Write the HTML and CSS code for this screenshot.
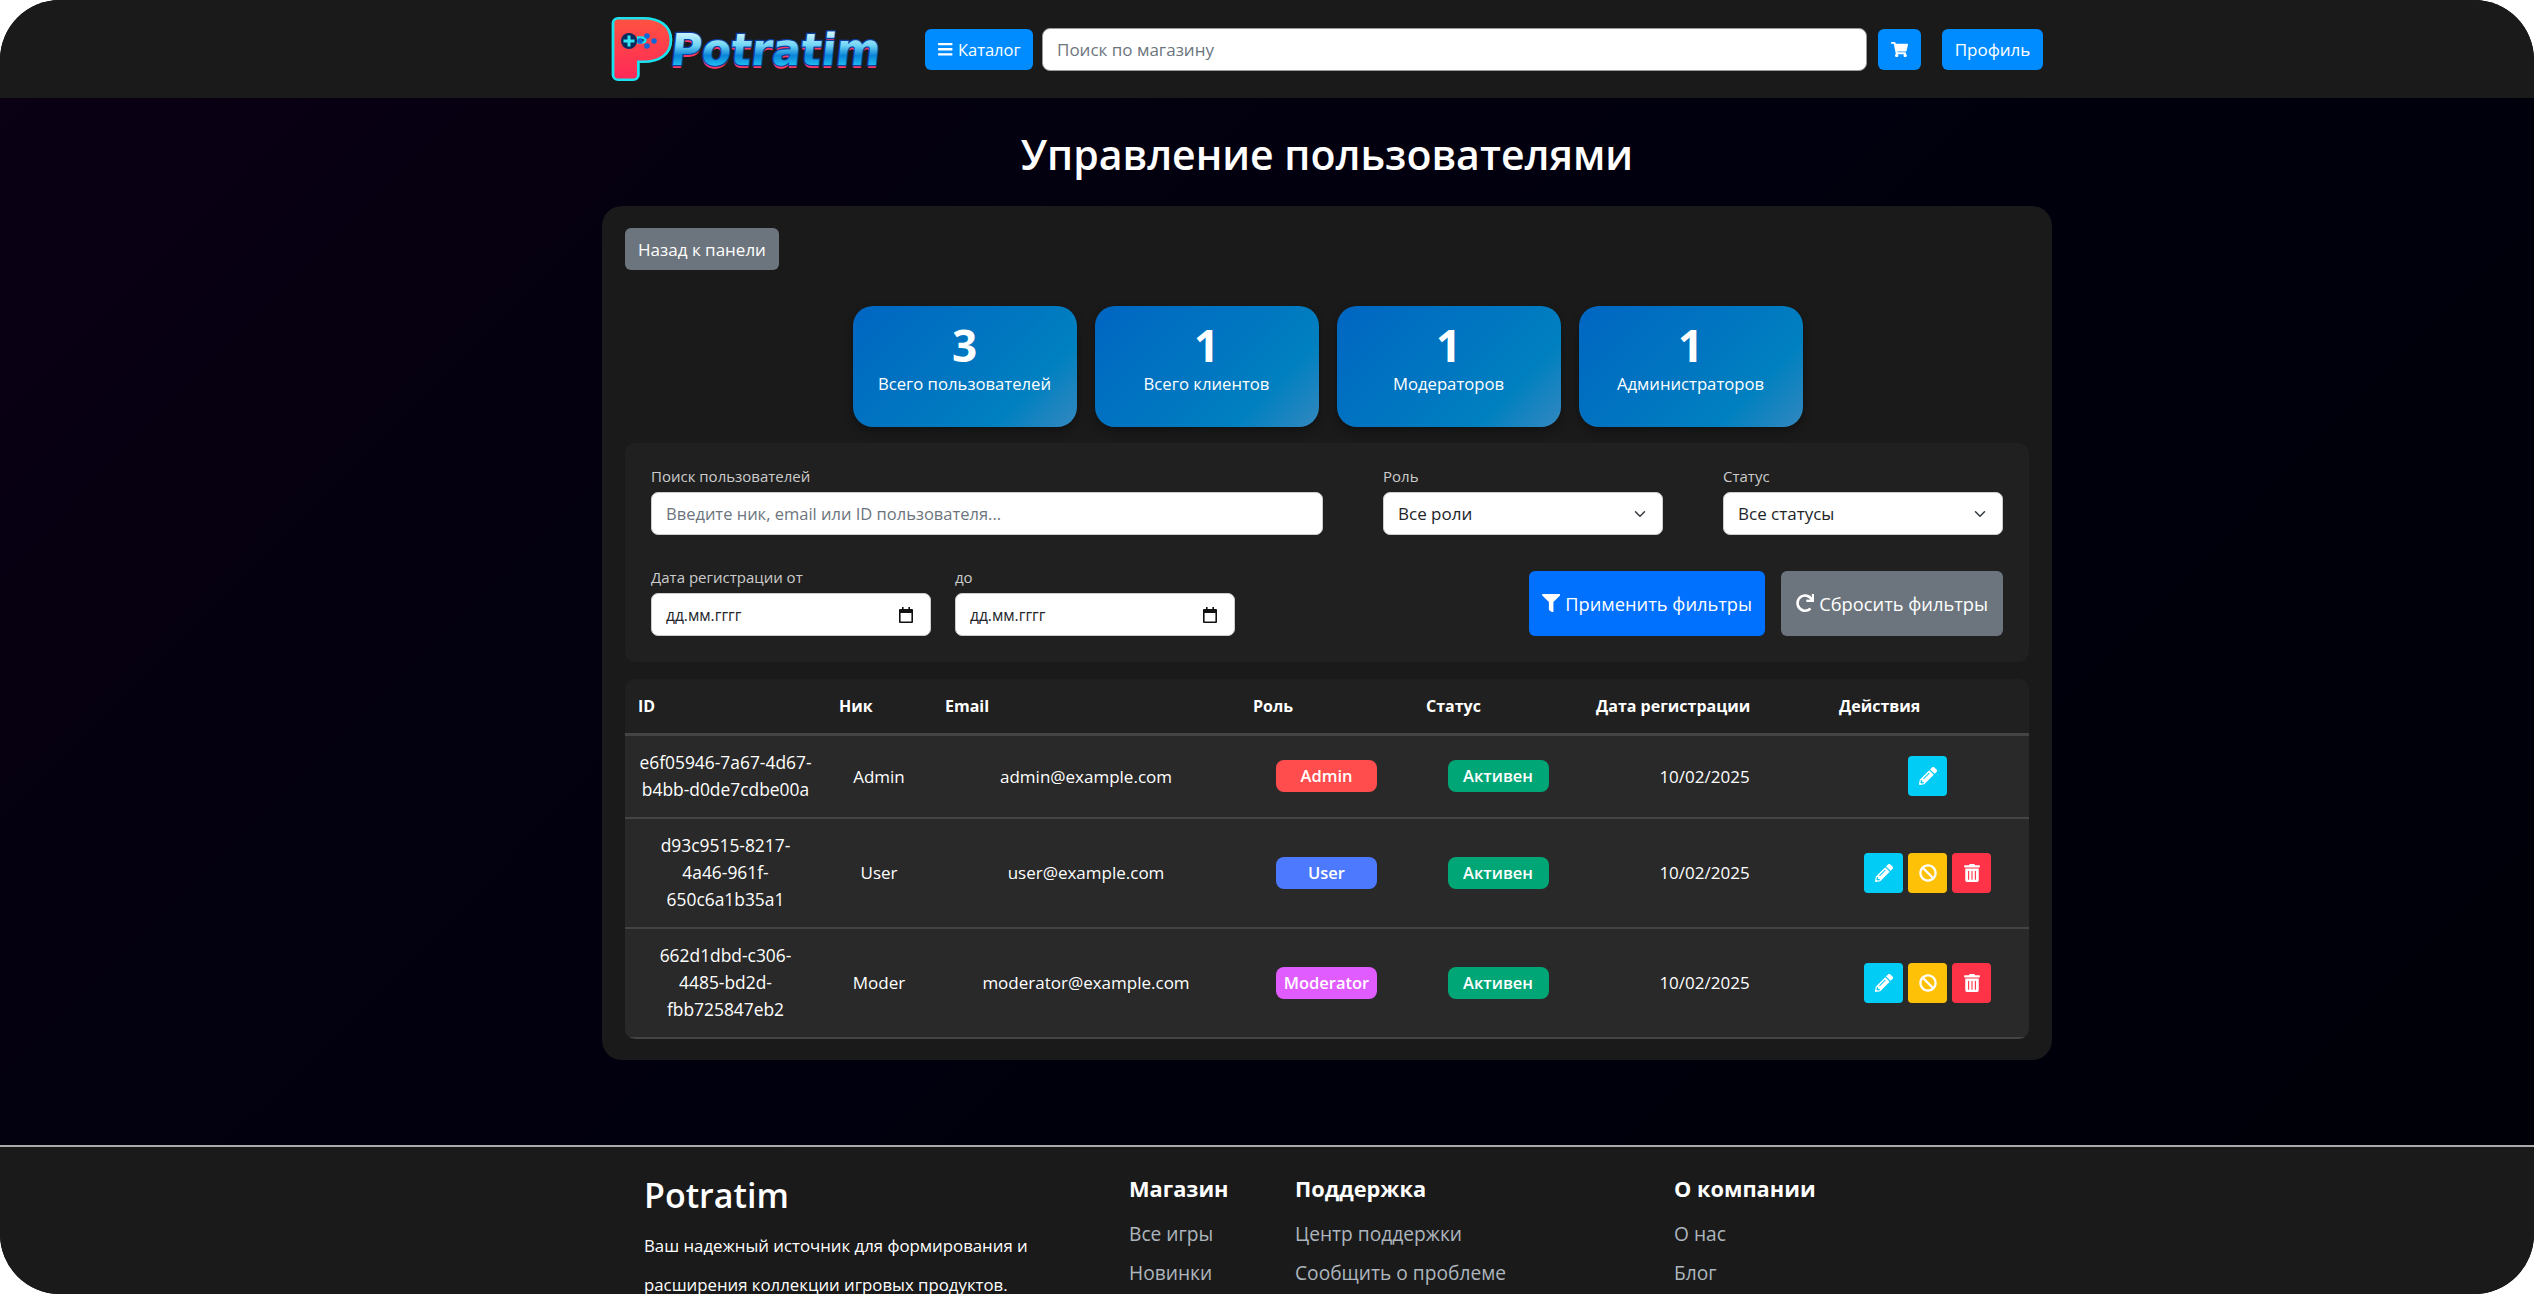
FILE: index.html
```html
<!DOCTYPE html>
<html lang="ru">
<head>
  <meta charset="UTF-8" />
  <meta name="viewport" content="width=device-width, initial-scale=1.0" />
  <title>Управление пользователями</title>
  <link rel="stylesheet" href="styles.css">
</head>
<body>
<svg class="icon-defs" width="0" height="0">
  <symbol id="i-bars" viewBox="0 0 448 512"><path d="M16 132h416c8.837 0 16-7.163 16-16V76c0-8.837-7.163-16-16-16H16C7.163 60 0 67.163 0 76v40c0 8.837 7.163 16 16 16zm0 160h416c8.837 0 16-7.163 16-16v-40c0-8.837-7.163-16-16-16H16c-8.837 0-16 7.163-16 16v40c0 8.837 7.163 16 16 16zm0 160h416c8.837 0 16-7.163 16-16v-40c0-8.837-7.163-16-16-16H16c-8.837 0-16 7.163-16 16v40c0 8.837 7.163 16 16 16z"/></symbol>
  <symbol id="i-cart" viewBox="0 0 576 512"><path d="M528.12 301.319l47.273-208C578.806 78.301 567.391 64 551.99 64H159.208l-9.166-44.81C147.758 8.021 137.93 0 126.529 0H24C10.745 0 0 10.745 0 24v16c0 13.255 10.745 24 24 24h69.883l70.248 343.435C147.325 417.1 136 435.222 136 456c0 30.928 25.072 56 56 56s56-25.072 56-56c0-15.674-6.447-29.835-16.824-40h209.647C430.447 426.165 424 440.326 424 456c0 30.928 25.072 56 56 56s56-25.072 56-56c0-22.172-12.888-41.332-31.579-50.405l5.517-24.276c3.413-15.018-8.002-29.319-23.403-29.319H218.117l-6.545-32h293.145c11.206 0 20.92-7.754 23.403-18.681z"/></symbol>
  <symbol id="i-filter" viewBox="0 0 512 512"><path d="M487.976 0H24.028C2.71 0-8.047 25.866 7.058 40.971L192 225.941V432c0 7.831 3.821 15.17 10.237 19.662l80 55.98C298.02 518.69 320 507.493 320 487.98V225.941l184.947-184.97C520.021 25.896 509.338 0 487.976 0z"/></symbol>
  <symbol id="i-redo" viewBox="0 0 512 512"><path d="M500.33 0h-47.41a12 12 0 0 0-12 12.57l4 82.76A247.42 247.42 0 0 0 256 8C119.34 8 7.9 119.53 8 256.19 8.1 393.07 119.1 504 256 504a247.1 247.1 0 0 0 166.18-63.91 12 12 0 0 0 .48-17.43l-34-34a12 12 0 0 0-16.38-.55A176 176 0 1 1 402.1 157.8l-101.53-4.87a12 12 0 0 0-12.57 12v47.41a12 12 0 0 0 12 12h200.33a12 12 0 0 0 12-12V12a12 12 0 0 0-12-12z"/></symbol>
  <symbol id="i-pencil" viewBox="0 0 512 512"><path d="M497.9 142.1l-46.1 46.1c-4.7 4.7-12.3 4.7-17 0l-111-111c-4.7-4.7-4.7-12.3 0-17l46.1-46.1c18.7-18.7 49.1-18.7 67.9 0l60.1 60.1c18.8 18.7 18.8 49.1 0 67.9zM284.2 99.8L21.6 362.4.4 483.9c-2.9 16.4 11.4 30.6 27.8 27.8l121.5-21.3 262.6-262.6c4.7-4.7 4.7-12.3 0-17l-111-111c-4.8-4.7-12.4-4.7-17.1 0zM124.1 339.9c-5.5-5.5-5.5-14.3 0-19.8l154-154c5.5-5.5 14.3-5.5 19.8 0s5.5 14.3 0 19.8l-154 154c-5.5 5.5-14.3 5.5-19.8 0zM88 424h48v36.3l-64.5 11.3-31.1-31.1L51.7 376H88v48z"/></symbol>
  <symbol id="i-ban" viewBox="0 0 512 512"><path d="M256 8C119.034 8 8 119.033 8 256s111.034 248 248 248 248-111.034 248-248S392.967 8 256 8zm130.108 117.892c65.448 65.448 70 165.481 20.677 235.637L150.47 105.216c70.204-49.356 170.226-44.735 235.638 20.676zM125.892 386.108c-65.448-65.448-70-165.481-20.677-235.637L361.53 406.784c-70.203 49.356-170.226 44.736-235.638-20.676z"/></symbol>
  <symbol id="i-trash" viewBox="0 0 448 512"><path d="M32 464a48 48 0 0 0 48 48h288a48 48 0 0 0 48-48V128H32zm272-256a16 16 0 0 1 32 0v224a16 16 0 0 1-32 0zm-96 0a16 16 0 0 1 32 0v224a16 16 0 0 1-32 0zm-96 0a16 16 0 0 1 32 0v224a16 16 0 0 1-32 0zM432 32H312l-9.4-18.7A24 24 0 0 0 281.1 0H166.8a23.72 23.72 0 0 0-21.4 13.3L136 32H16A16 16 0 0 0 0 48v32a16 16 0 0 0 16 16h416a16 16 0 0 0 16-16V48a16 16 0 0 0-16-16z"/></symbol>
  <symbol id="i-cal" viewBox="0 0 16 16"><path d="M4 0h1.6v2h4.8V0H12v2h2a1 1 0 0 1 1 1v12a1 1 0 0 1-1 1H2a1 1 0 0 1-1-1V3a1 1 0 0 1 1-1h2zM2.6 6v8.4h10.8V6z"/></symbol>
</svg>

<div class="shell">
  <header class="navbar">
    <div class="nav-inner">
      <a class="logo" href="#">
        <svg width="323" height="98" viewBox="0 0 323 98">
          <defs>
            <linearGradient id="logoRed" x1="0" y1="0" x2="0" y2="1">
              <stop offset="0" stop-color="#ff5a3c"/>
              <stop offset="1" stop-color="#ff1f5e"/>
            </linearGradient>
            <linearGradient id="logoBlue" x1="0" y1="0" x2="0" y2="1">
              <stop offset="0.1" stop-color="#e6fbff"/>
              <stop offset="0.42" stop-color="#6fd4f5"/>
              <stop offset="0.62" stop-color="#0a84d8"/>
              <stop offset="0.85" stop-color="#22c8f5"/>
            </linearGradient>
          </defs>
          <text class="logo-p logo-p-edge" x="9" y="75" textLength="58" lengthAdjust="spacingAndGlyphs">P</text>
          <text class="logo-p logo-p-fill" x="9" y="75" textLength="58" lengthAdjust="spacingAndGlyphs">P</text>
          <circle cx="27" cy="41" r="8" fill="#0b2a5c"/>
          <path d="M25.5 35.5h3v4h4v3h-4v4h-3v-4h-4v-3h4z" fill="#35e3f2"/>
          <circle cx="38" cy="41" r="2.8" fill="#1066d8"/>
          <circle cx="45" cy="36" r="2.8" fill="#1066d8"/>
          <circle cx="45" cy="46" r="2.8" fill="#1066d8"/>
          <circle cx="52" cy="41" r="2.8" fill="#1066d8"/>
          <g transform="translate(74 0) skewX(-6)">
            <text class="logo-word logo-word-shadow" x="0" y="68" textLength="210" lengthAdjust="spacingAndGlyphs">Potratim</text>
            <text class="logo-word logo-word-main" x="0" y="65" textLength="210" lengthAdjust="spacingAndGlyphs">Potratim</text>
          </g>
        </svg>
      </a>
      <button class="nav-btn catalog-btn"><svg class="icon"><use href="#i-bars"/></svg>Каталог</button>
      <input class="nav-search" type="text" placeholder="Поиск по магазину" />
      <button class="nav-btn cart-btn"><svg class="icon"><use href="#i-cart"/></svg></button>
      <button class="nav-btn profile-btn">Профиль</button>
    </div>
  </header>

  <main class="main">
    <h1 class="page-title">Управление пользователями</h1>

    <section class="card">
      <button class="btn-grey back-btn">Назад к панели</button>

      <div class="stats">
        <div class="stat"><b>3</b><span>Всего пользователей</span></div>
        <div class="stat"><b>1</b><span>Всего клиентов</span></div>
        <div class="stat"><b>1</b><span>Модераторов</span></div>
        <div class="stat"><b>1</b><span>Администраторов</span></div>
      </div>

      <div class="filters">
        <div class="filter-row">
          <div class="field field-search">
            <label>Поиск пользователей</label>
            <input type="text" placeholder="Введите ник, email или ID пользователя..." />
          </div>
          <div class="field field-select">
            <label>Роль</label>
            <select><option>Все роли</option></select>
          </div>
          <div class="field field-select">
            <label>Статус</label>
            <select><option>Все статусы</option></select>
          </div>
        </div>
        <div class="filter-row filter-row-2">
          <div class="field field-date">
            <label>Дата регистрации от</label>
            <div class="date-box"><span>дд.мм.гггг</span><svg class="icon-cal"><use href="#i-cal"/></svg></div>
          </div>
          <div class="field field-date">
            <label>до</label>
            <div class="date-box"><span>дд.мм.гггг</span><svg class="icon-cal"><use href="#i-cal"/></svg></div>
          </div>
          <div class="filter-actions">
            <button class="btn-apply"><svg class="icon"><use href="#i-filter"/></svg>Применить фильтры</button>
            <button class="btn-reset"><svg class="icon"><use href="#i-redo"/></svg>Сбросить фильтры</button>
          </div>
        </div>
      </div>

      <div class="table-wrap">
        <table class="users">
          <colgroup>
            <col class="c-id"><col class="c-nick"><col class="c-email"><col class="c-role"><col class="c-status"><col class="c-date"><col class="c-actions">
          </colgroup>
          <thead>
            <tr><th>ID</th><th>Ник</th><th>Email</th><th>Роль</th><th>Статус</th><th>Дата регистрации</th><th>Действия</th></tr>
          </thead>
          <tbody>
            <tr>
              <td class="cell-id">e6f05946-7a67-4d67-<br>b4bb-d0de7cdbe00a</td>
              <td>Admin</td>
              <td>admin@example.com</td>
              <td><span class="badge role-admin">Admin</span></td>
              <td><span class="badge status-active">Активен</span></td>
              <td>10/02/2025</td>
              <td><div class="actions"><button class="act act-edit"><svg class="icon"><use href="#i-pencil"/></svg></button></div></td>
            </tr>
            <tr>
              <td class="cell-id">d93c9515-8217-<br>4a46-961f-<br>650c6a1b35a1</td>
              <td>User</td>
              <td>user@example.com</td>
              <td><span class="badge role-user">User</span></td>
              <td><span class="badge status-active">Активен</span></td>
              <td>10/02/2025</td>
              <td><div class="actions"><button class="act act-edit"><svg class="icon"><use href="#i-pencil"/></svg></button><button class="act act-ban"><svg class="icon"><use href="#i-ban"/></svg></button><button class="act act-del"><svg class="icon icon-trash"><use href="#i-trash"/></svg></button></div></td>
            </tr>
            <tr>
              <td class="cell-id">662d1dbd-c306-<br>4485-bd2d-<br>fbb725847eb2</td>
              <td>Moder</td>
              <td>moderator@example.com</td>
              <td><span class="badge role-moder">Moderator</span></td>
              <td><span class="badge status-active">Активен</span></td>
              <td>10/02/2025</td>
              <td><div class="actions"><button class="act act-edit"><svg class="icon"><use href="#i-pencil"/></svg></button><button class="act act-ban"><svg class="icon"><use href="#i-ban"/></svg></button><button class="act act-del"><svg class="icon icon-trash"><use href="#i-trash"/></svg></button></div></td>
            </tr>
          </tbody>
        </table>
      </div>
    </section>
  </main>

  <footer class="footer">
    <div class="footer-inner">
      <div class="footer-brand">
        <h3>Potratim</h3>
        <p>Ваш надежный источник для формирования и<br>расширения коллекции игровых продуктов.</p>
      </div>
      <div class="footer-col">
        <h4>Магазин</h4>
        <a href="#">Все игры</a>
        <a href="#">Новинки</a>
      </div>
      <div class="footer-col">
        <h4>Поддержка</h4>
        <a href="#">Центр поддержки</a>
        <a href="#">Сообщить о проблеме</a>
      </div>
      <div class="footer-col">
        <h4>О компании</h4>
        <a href="#">О нас</a>
        <a href="#">Блог</a>
      </div>
    </div>
  </footer>
</div>
</body>
</html>
```

FILE: styles.css
```css
* {
  box-sizing: border-box;
}
html, body {
  margin: 0;
  height: 100%;
  background: #fff;
}
body {
  font-family: "Open Sans", "Noto Sans", sans-serif;
  font-size: 17px;
  color: #fff;
  overflow: hidden;
}
button {
  font-family: inherit;
  color: #fff;
  border: none;
  cursor: pointer;
}
.icon-defs {
  position: absolute;
}
.icon {
  width: 1em;
  height: 1em;
  fill: currentColor;
}

.shell {
  height: 1294px;
  border-radius: 60px;
  overflow: hidden;
  display: flex;
  flex-direction: column;
  background: linear-gradient(135deg, #0b0014 0%, #03000f 30%, #00000d 60%, #000008 100%);
}

/* navbar */
.navbar {
  flex: 0 0 98px;
  background: #1a1a1a;
}
.nav-inner {
  width: 1450px;
  height: 100%;
  margin-left: 602px;
  display: flex;
  align-items: center;
  padding-right: 9px;
}
.logo {
  flex: 0 0 323px;
  display: block;
  height: 98px;
}
.logo svg {
  display: block;
}
.logo-p {
  font-family: "DejaVu Sans", sans-serif;
  font-weight: bold;
  font-size: 72px;
}
.logo-p-edge {
  fill: #19e3ee;
  stroke: #19e3ee;
  stroke-width: 12px;
  stroke-linejoin: round;
}
.logo-p-fill {
  fill: url(#logoRed);
  stroke: url(#logoRed);
  stroke-width: 7px;
  stroke-linejoin: round;
}
.logo-word {
  font-family: "DejaVu Sans", sans-serif;
  font-weight: bold;
  font-size: 44px;
}
.logo-word-main {
  fill: url(#logoBlue);
  stroke: #0a3d9c;
  stroke-width: 2.5px;
  paint-order: stroke;
}
.logo-word-shadow {
  fill: #ff3a68;
}
.nav-btn {
  height: 41px;
  background: #008cff;
  border-radius: 6px;
  font-size: 17px;
  display: flex;
  align-items: center;
  justify-content: center;
}
.catalog-btn {
  flex: 0 0 108px;
  gap: 4px;
  padding: 0;
  font-size: 16.5px;
}
.cart-btn {
  flex: 0 0 43px;
  margin-left: 11px;
}
.profile-btn {
  flex: 0 0 101px;
  margin-left: 21px;
  padding: 0;
}
.nav-search {
  flex: 1;
  height: 43px;
  margin-left: 9px;
  padding: 0 14px;
  border: 1px solid #999;
  border-radius: 8px;
  font: 17px "Open Sans", sans-serif;
}
.nav-search::placeholder {
  color: #6c757d;
}

/* main */
.main {
  flex: 1;
  min-height: 0;
}
.page-title {
  margin: 0 0 0 602px;
  width: 1450px;
  height: 108px;
  padding-top: 4px;
  display: flex;
  align-items: center;
  justify-content: center;
  font-size: 41px;
  font-weight: 600;
}
.card {
  width: 1450px;
  margin-left: 602px;
  padding: 22px 23px 21px;
  background: #1a1a1a;
  border-radius: 20px;
}
.btn-grey {
  display: block;
  background: #6c757d;
  border-radius: 6px;
}
.back-btn {
  width: 154px;
  height: 42px;
  padding: 0;
  font-size: 17px;
}

.stats {
  margin-top: 36px;
  padding-left: 1px;
  display: flex;
  justify-content: center;
  gap: 18px;
}
.stat {
  width: 224px;
  height: 121px;
  border-radius: 20px;
  background: linear-gradient(135deg, #0066c2 0%, #0078c0 55%, #0080c0 75%, #3388bf 100%);
  box-shadow: 0 4px 10px rgba(0, 0, 0, 0.35);
  display: flex;
  flex-direction: column;
  align-items: center;
  padding-top: 12px;
}
.stat b {
  font-size: 44px;
  line-height: 54px;
}
.stat span {
  font-size: 16.7px;
  line-height: 24px;
}

/* filters */
.filters {
  margin-top: 16px;
  padding: 26px;
  background: #202020;
  border-radius: 10px;
}
.filter-row {
  display: flex;
  gap: 60px;
}
.filter-row-2 {
  margin-top: 35px;
  gap: 24px;
  align-items: flex-end;
}
.field label {
  display: block;
  height: 23px;
  font-size: 15px;
  line-height: 14px;
  color: #ccc;
}
.field-search {
  flex: 0 0 672px;
}
.field-select {
  flex: 0 0 280px;
}
.field-date {
  flex: 0 0 280px;
}
.field input, .field select, .date-box {
  width: 100%;
  height: 43px;
  border: 1px solid #ccc;
  border-radius: 7px;
  background-color: #fff;
  font: 17px "Open Sans", sans-serif;
  color: #212529;
}
.field input {
  padding: 0 14px;
  font-size: 16.5px;
}
.field input::placeholder {
  color: #6c757d;
}
.field select {
  appearance: none;
  padding: 0 14px;
  background-image: url("data:image/svg+xml,%3csvg xmlns='http://www.w3.org/2000/svg' viewBox='0 0 16 16'%3e%3cpath fill='none' stroke='%23343a40' stroke-linecap='round' stroke-linejoin='round' stroke-width='2' d='M2 5l6 6 6-6'/%3e%3c/svg%3e");
  background-repeat: no-repeat;
  background-position: right 15px center;
  background-size: 14px 12px;
}
.date-box {
  display: flex;
  align-items: center;
  justify-content: space-between;
  padding: 0 16px 0 14px;
  font-size: 15.5px;
}
.icon-cal {
  width: 16px;
  height: 16px;
  fill: #111;
}
.filter-actions {
  margin-left: auto;
  display: flex;
  gap: 16px;
}
.filter-actions button {
  height: 65px;
  padding: 0;
  border-radius: 6px;
  font-size: 18.3px;
  display: flex;
  align-items: center;
  justify-content: center;
  gap: 5px;
}
.btn-apply {
  width: 236px;
  background: #0070ff;
}
.btn-reset {
  width: 222px;
  background: #6c757d;
}

/* table */
.table-wrap {
  margin-top: 17px;
  border-radius: 10px;
  overflow: hidden;
}
.users {
  width: 100%;
  border-collapse: collapse;
  table-layout: fixed;
  font-size: 17px;
}
.c-id { width: 201px; }
.c-nick { width: 106px; }
.c-email { width: 308px; }
.c-role { width: 173px; }
.c-status { width: 170px; }
.c-date { width: 243px; }
.c-actions { width: 203px; }
.users th {
  height: 55px;
  padding: 0 13px;
  background: #202020;
  border-bottom: 3px solid #444;
  text-align: left;
  font-size: 16px;
  font-weight: 700;
  white-space: nowrap;
}
.users td {
  padding: 13.5px 0;
  background: #292929;
  border-bottom: 2px solid #444;
  text-align: center;
  vertical-align: middle;
  line-height: 27px;
}
.users td.cell-id {
  font-size: 17.4px;
}
.badge {
  display: inline-block;
  min-width: 101px;
  height: 32px;
  line-height: 32px;
  padding: 0 4px;
  border-radius: 8px;
  font-size: 16.5px;
  font-weight: 600;
  vertical-align: middle;
}
.role-admin { background: #ff4d4d; }
.role-user { background: #4d79ff; }
.role-moder { background: #e05cff; }
.status-active { background: #00a676; }

.actions {
  width: 128px;
  margin: 0 auto;
  display: flex;
  justify-content: center;
  gap: 5px;
}
.act {
  width: 39px;
  height: 40px;
  padding: 0;
  border-radius: 4px;
  font-size: 18px;
  display: flex;
  align-items: center;
  justify-content: center;
}
.icon-trash {
  width: 16px;
}
.act-edit { background: #00ccf5; }
.act-ban { background: #ffc107; }
.act-del { background: #ff3347; }

/* footer */
.footer {
  flex: 0 0 149px;
  min-height: 0;
  overflow: hidden;
  background: #1a1a1a;
  border-top: 2px solid #aaa;
}
.footer-inner {
  width: 1450px;
  margin-left: 602px;
  padding-left: 42px;
  display: grid;
  grid-template-columns: 485px 166px 379px auto;
}
.footer-brand h3 {
  margin: 25px 0 0;
  font-size: 34px;
  font-weight: 600;
  line-height: 46px;
}
.footer-brand p {
  margin: 8px 0 0;
  font-size: 16.8px;
  line-height: 39px;
}
.footer-col h4 {
  margin: 27px 0 0;
  font-size: 21.8px;
  font-weight: 700;
  line-height: 30px;
}
.footer-col a {
  display: block;
  margin-top: 9px;
  font-size: 19.2px;
  line-height: 30px;
  color: #adb5bd;
  text-decoration: none;
}
.footer-col h4 + a {
  margin-top: 15px;
}
```
